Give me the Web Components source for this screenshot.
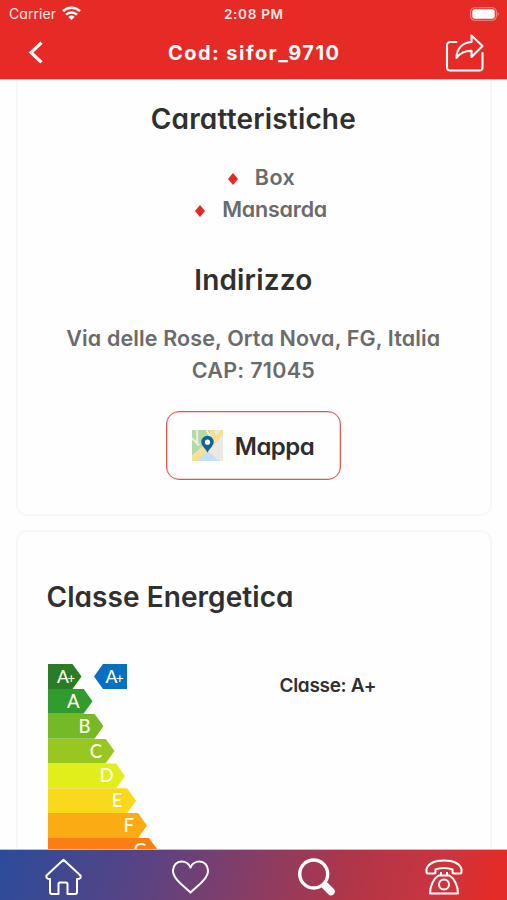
<!DOCTYPE html>
<html lang="it">
<head>
<meta charset="utf-8">
<title>Cod: sifor_9710</title>
<style>
html,body{margin:0;height:900px;overflow:hidden;background:#fefefe;font-family:Inter,"Liberation Sans",sans-serif;font-feature-settings:"cv11"}
</style>
</head>
<body>
<property-app></property-app>
<script>
const define=(name,html,setup)=>customElements.define(name,class extends HTMLElement{
  connectedCallback(){
    if(this.shadowRoot)return;
    const t=document.createElement('template');
    t.innerHTML=typeof html==='function'?html(this):html;
    this.attachShadow({mode:'open'}).append(t.content.cloneNode(true));
    if(setup)setup(this);
  }
});

/* One line of text whose tracking is adjusted to fill the width attribute. */
define('fit-text','<style>:host{display:block;white-space:nowrap;line-height:inherit}span{display:inline-block}</style><span><slot></slot></span>',el=>{
  const want=+el.getAttribute('width'),s=el.shadowRoot.querySelector('span');
  el.style.width=want+'px';
  const n=el.textContent.length,w=s.getBoundingClientRect().width;
  s.style.letterSpacing=(want-w)/(n-1)+'px';
});

define('status-bar',`<style>
:host{display:grid;grid-template-columns:1fr auto 1fr;align-items:center;height:27px;padding:0 7px 0 9px;color:#ffe9e7;font-size:14px;line-height:20px}
.l{display:flex;align-items:center;gap:6px}.r{justify-self:end;display:flex}fit-text.t{font-weight:600;font-size:13.5px;position:relative;left:-1px}svg{display:block}
</style>
<div class="l"><fit-text width="47">Carrier</fit-text><svg width="19" height="15" viewBox="0 0 19 15" fill="none" stroke="#fff" stroke-width="2.5"><path d="M1 5.2a12.2 12.2 0 0 1 17 0M4 8.6a8 8 0 0 1 11 0"/><path d="M9.5 14 6.4 11a4.5 4.5 0 0 1 6.2 0z" fill="#fff" stroke="none"/></svg></div>
<fit-text class="t" width="59">2:08 PM</fit-text>
<div class="r"><svg width="30" height="14" viewBox="0 0 30 14"><rect x=".7" y=".7" width="25.6" height="12.6" rx="4" fill="none" stroke="#f4908d" stroke-width="1.1"/><rect x="2.3" y="2.3" width="22.4" height="9.4" rx="2.3" fill="#fff"/><path d="M27.7 5v4q2-2 0-4" fill="#f4a09d"/></svg></div>`);

define('title-bar',`<style>
:host{display:grid;grid-template-columns:1fr auto 1fr;align-items:center;height:52px;padding:0 21px 0 28px;color:#fff;font-size:20px;font-weight:700}
svg{display:block}.s{justify-self:end}fit-text{position:relative;top:-.5px;left:-3.5px}
</style>
<svg width="16" height="24" viewBox="0 0 16 24" fill="none" stroke="#fff" stroke-width="3.2"><path d="M13.5 1.6 3 11.500l10.500 9.800"/></svg>
<fit-text width="171">Cod: sifor_9710</fit-text>
<svg class="s" width="41" height="40" viewBox="0 0 41 40" fill="none" stroke="#fff" stroke-width="2.100" stroke-linejoin="round" stroke-linecap="round"><path d="M11.500 9H5a3 3 0 0 0-3 3V34.500a3 3 0 0 0 3 3h29.500a3 3 0 0 0 3-3V20"/><path d="M26.500 2.500V9C17.500 9.500 11.500 15.500 11.500 25c3.500-5 8-7 15-7.200V24L37.500 13z"/></svg>`);

define('app-header','<style>:host{display:block;flex:none;height:79px;background:#e62a26;box-shadow:0 1px 0 #f9b8b6;z-index:1}</style><status-bar></status-bar><title-bar></title-bar>');

define('info-card','<style>:host{display:flex;flex-direction:column;box-sizing:border-box;margin:0 15px 0 16px;border:2px solid #f7f7f7;border-radius:11px;background:#fefefe;flex:none}</style><slot></slot>');

define('section-title',el=>`<style>:host{display:block;font-size:28px;font-weight:600;line-height:40px;color:#303030}</style><fit-text width="${el.getAttribute('width')}">${el.textContent}</fit-text>`);

define('feature-item',el=>`<style>:host{display:flex;align-items:center;gap:17px;height:32px;font-size:21.5px;font-weight:600;color:#6b6b6b}svg{display:block;position:relative;top:1.5px}</style>
<svg width="10" height="12" viewBox="0 0 10 12"><path d="M5 0 10 6 5 12 0 6z" fill="#e22823"/></svg><fit-text width="${el.getAttribute('width')}">${el.textContent}</fit-text>`);

define('map-button',`<style>
:host{display:flex;align-items:center;box-sizing:border-box;width:175px;height:69px;padding-left:25px;gap:12px;border:1px solid #e65250;box-shadow:inset 0 0 0 .5px #f2a09e;border-radius:13px;font-size:24px;font-weight:600;color:#2d2d2d}
svg{display:block}fit-text{line-height:32px;padding-top:2px}
</style>
<svg width="31" height="31" viewBox="0 0 30 30"><path fill="#ece9e4" d="M0 0h30v30H0z"/><path fill="#b5d9a6" d="M0 0h18v9L0 25z"/><path d="M5 0v14M0 8l7 7M14 0l5 9" stroke="#e8f1dc" stroke-width="2"/><path fill="#f8df91" d="M17 0h5l1 5 5-5h2v5L6 30H0v-4L19 8z"/><path fill="#c4dff8" d="m5 30 10-10 12 10z"/><path d="M15 22c-1.500-4-6-6.500-6-10.500a6 6 0 0 1 12 0C21 15.500 16.500 18 15 22z" fill="#146293"/><circle cx="15" cy="11.800" r="2.500" fill="#fff"/></svg>
<fit-text width="80">Mappa</fit-text>`);

define('energy-row',el=>{
  const w=+el.getAttribute('w'),back=el.hasAttribute('back'),plus=el.textContent.includes('+');
  const shape=back?'100% 0,100% 100%,9px 100%,0 50%,9px 0':'0 0,calc(100% - 9px) 0,100% 50%,calc(100% - 9px) 100%,0 100%';
  return `<style>:host{display:block;width:${w}px;height:24.85px}div{box-sizing:border-box;height:25px;background:${el.getAttribute('color')};clip-path:polygon(${shape});display:flex;align-items:center;justify-content:flex-end;padding-right:${back?3.5:plus?6.5:el.getAttribute('pad')||13}px;color:#ffffe8;font:500 18.500px/25px Lato,sans-serif}.p{font-size:17.500px;letter-spacing:-1.500px}b{font:500 13px/15px Lato,sans-serif;letter-spacing:0}</style><div><span class="${plus?'p':''}">${el.textContent[0]}${plus?'<b>+</b>':''}</span></div>`;
});

define('energy-chart',`<style>:host{display:flex;gap:12.500px;width:170px}.c{display:flex;flex-direction:column}</style>
<div class="c" style="margin-right:-76.500px">
<energy-row w="33.500" color="#2a7d26">A+</energy-row>
<energy-row w="44.500" color="#319b2d">A</energy-row>
<energy-row w="55.500" color="#75b927">B</energy-row>
<energy-row w="66.500" pad="12.500" color="#98c722">C</energy-row>
<energy-row w="77" pad="11.500" color="#e2ee1b">D</energy-row>
<energy-row w="88" pad="13.500" color="#f9d91b">E</energy-row>
<energy-row w="99" pad="13" color="#fbab13">F</energy-row>
<energy-row w="110" pad="11" color="#fa7e14">G</energy-row>
</div>
<energy-row w="33" back color="#0870c0">A+</energy-row>`);

define('bottom-nav',`<style>
:host{display:grid;grid-template-columns:repeat(4,1fr);flex:none;height:50px;justify-items:center;align-items:start;padding:8px 0 0;box-sizing:border-box;background:linear-gradient(108deg,#2b4c9b 0%,#5a4383 29%,#8c3c62 52%,#b33547 70%,#c93540 85%,#e52b27 97%);box-shadow:0 -1px 0 #c7bbc9;z-index:1}
svg{display:block}
</style>
<svg width="38" height="38" viewBox="-1 0 38 38" fill="none" stroke="#fff" stroke-width="2" stroke-linejoin="round"><path d="M18.500 1.700 1.500 17.500q-.8 3.500 3.500 3.500V34q0 2 2 2h6.500V26q0-1.500 1.500-1.500h6q1.500 0 1.500 1.500v10h7.500q2 0 2-2V21q4.500 0 3.500-3.500z"/></svg>
<svg width="38" height="38" viewBox="-.5 0 38 38" fill="none" stroke="#fff" stroke-width="2" stroke-linejoin="round"><path d="M19 34.500C13 28.500 1.500 21.500 1.500 12.500 1.500 7 5.500 3.500 10 3.500c4 0 7.500 2.500 9 6 1.500-3.500 5-6 9-6 4.500 0 8.500 3.500 8.500 9 0 9-11.500 16-17.500 22z"/></svg>
<svg width="38" height="38" viewBox="0 0 38 38" fill="none" stroke="#fff"><circle cx="15.700" cy="16" r="14" stroke-width="3.400"/><path d="m25.500 26 1.500 1.500" stroke-width="4"/><path d="m27.500 28 5.500 5.500" stroke-width="7.500" stroke-linecap="round"/></svg>
<svg width="38" height="38" viewBox="0 0 38 38" fill="none" stroke="#fff" stroke-width="2" stroke-linejoin="round"><path d="M10.500 11.500v2.500q0 1.500-1.500 1.500H3q-1.500 0-1.500-1.500v-3C3.500 5 11 2.500 19 2.500S34.500 5 36.500 11v3q0 1.500-1.500 1.500h-6q-1.500 0-1.500-1.500v-2.500q-8.500-3-17 0z"/><path d="M16 14v3.500M22 14v3.500M13.500 17.500h11c5 3 8.500 10.500 8.500 18H5c0-7.500 3.500-15 8.500-18z"/><circle cx="19" cy="26.500" r="5"/></svg>`);

define('property-app',`<style>
:host{display:flex;flex-direction:column;height:900px;width:507px}
main{flex:1;min-height:0;overflow:hidden;display:flex;flex-direction:column;gap:14px}
.info{align-items:center;border-top:0;border-radius:0 0 11px 11px;height:437px;padding:20px 1.500px 0 0}
ul,p{margin:0;padding:0}
ul{display:flex;flex-direction:column;align-items:center;margin:22px 0 35px;padding-left:16px}
.addr{display:flex;flex-direction:column;align-items:center;margin:22px 0 25px;font-size:21.500px;font-weight:600;line-height:32px;color:#6b6b6b}
.energy{height:420px;padding:45px 28px 0 28.500px}
.row{display:grid;grid-template-columns:231.500px auto;margin:47px 0 0 1.500px;align-items:start}
.row fit-text{font-size:19px;font-weight:600;line-height:26px;color:#303030;margin-top:9px}
</style>
<app-header></app-header>
<main>
<info-card class="info">
<section-title width="205">Caratteristiche</section-title>
<ul><feature-item width="40">Box</feature-item><feature-item width="105">Mansarda</feature-item></ul>
<section-title width="118">Indirizzo</section-title>
<p class="addr"><fit-text width="374">Via delle Rose, Orta Nova, FG, Italia</fit-text><fit-text width="123">CAP: 71045</fit-text></p>
<map-button></map-button>
</info-card>
<info-card class="energy">
<section-title width="247">Classe Energetica</section-title>
<div class="row"><energy-chart></energy-chart><fit-text width="97">Classe: A+</fit-text></div>
</info-card>
</main>
<bottom-nav></bottom-nav>`);
</script>
</body>
</html>
